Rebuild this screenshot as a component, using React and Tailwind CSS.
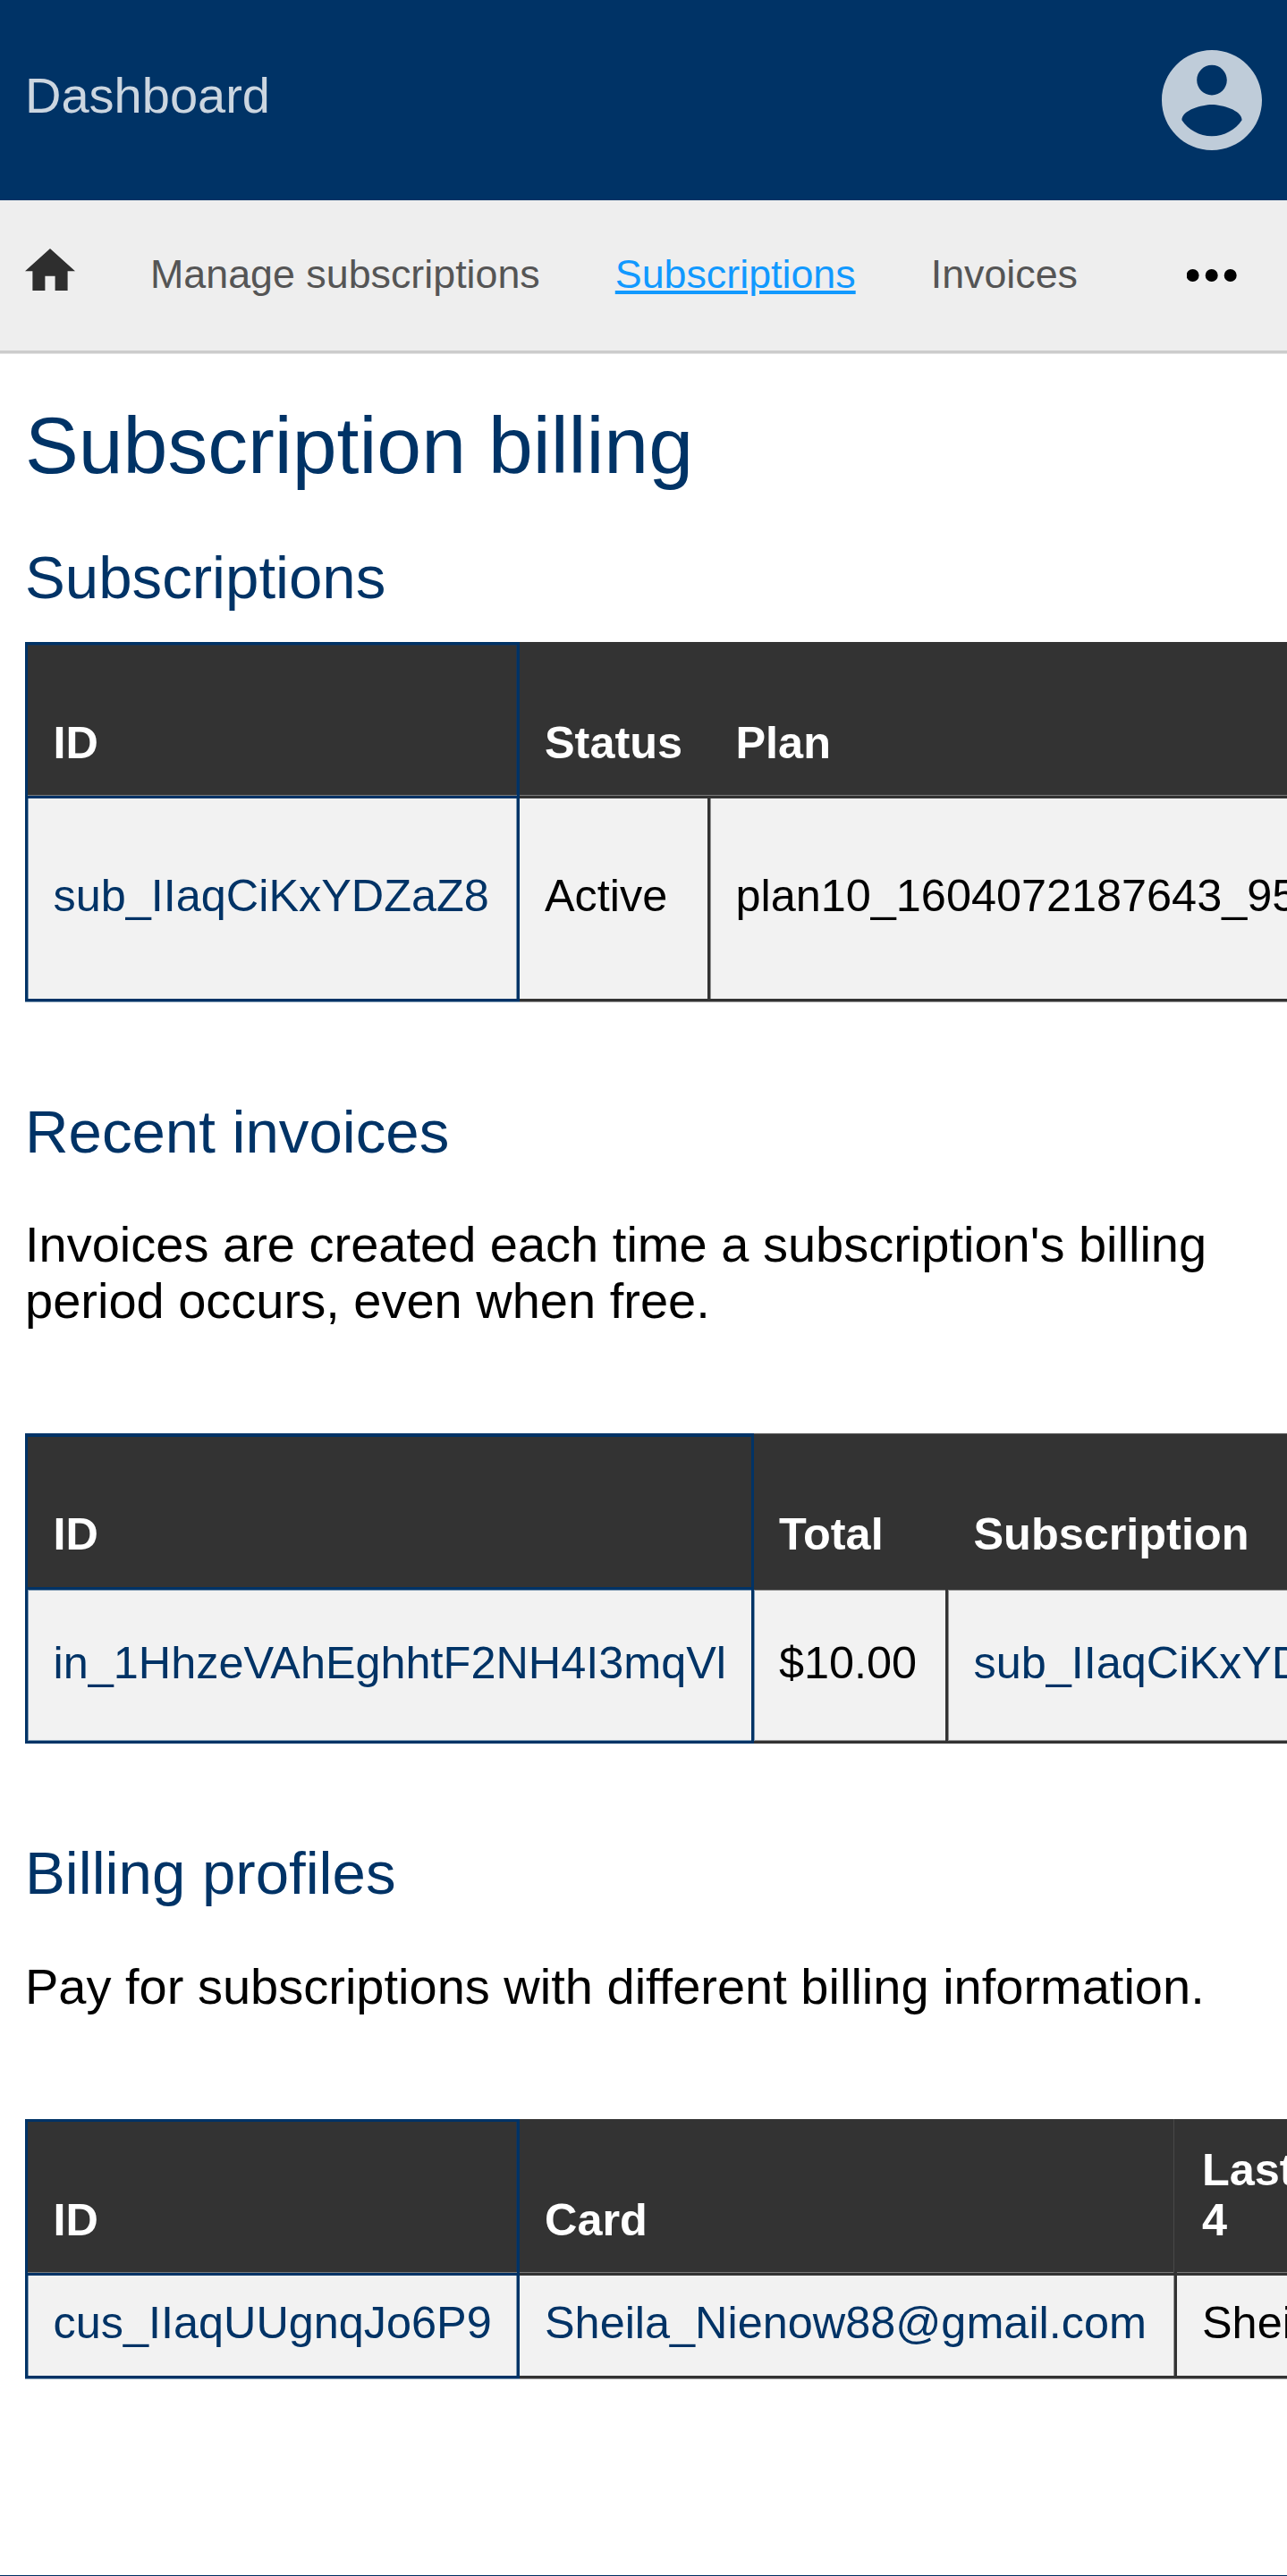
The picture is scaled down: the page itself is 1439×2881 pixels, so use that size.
const HOME = 'M10 20v-6h4v6h5v-8h3L12 3 2 12h3v8z';
const ACCOUNT =
  'M12 2C6.48 2 2 6.48 2 12s4.48 10 10 10 10-4.48 10-10S17.52 2 12 2zm0 3c1.66 0 3 1.34 3 3s-1.34 3-3 3-3-1.34-3-3 1.34-3 3-3zm0 14.2c-2.5 0-4.71-1.28-6-3.22.03-1.99 4-3.08 6-3.08 1.99 0 5.97 1.09 6 3.08-1.29 1.94-3.5 3.22-6 3.22z';

function Header() {
  return (
    <header className="flex h-[224px] items-start justify-between bg-[#003366] px-[28px] pt-[56px]">
      <a className="pt-[19px] text-[56px] leading-[64px] text-[#ccd6e0]">Dashboard</a>
      <svg className="h-[112px] w-[112px]" viewBox="2 2 20 20" fill="#bfccd9">
        <path d={ACCOUNT} />
      </svg>
    </header>
  );
}

function Nav() {
  return (
    <nav className="mb-px flex h-[171px] items-start border-b-[3px] border-[#cccccc] bg-[#eeeeee] pl-[28px] pr-[56px] text-[44.8px] leading-[52px] text-[#555555] shadow-[0_1px_0_#e4e4e4]">
      <svg className="mt-[53.5px] h-[47.6px] w-[56px] shrink-0" viewBox="2 3 20 17" preserveAspectRatio="none" fill="#2e2e2e">
        <path d={HOME} />
      </svg>
      <div className="flex gap-[84px] pl-[84px] pt-[56px] whitespace-nowrap">
        <a>Manage subscriptions</a>
        <a className="text-[#1199ff] underline">Subscriptions</a>
        <a>Invoices</a>
      </div>
      <svg className="ml-auto mt-[77px] h-[14px] w-[56px] shrink-0" viewBox="0 0 56 14">
        <circle cx="6.6" cy="7" r="7" />
        <circle cx="27.7" cy="7" r="7" />
        <circle cx="48.7" cy="7" r="7" />
      </svg>
    </nav>
  );
}

function Heading({ children, className }) {
  return <h2 className={`text-[67.2px] leading-[77px] text-[#003366] ${className}`}>{children}</h2>;
}

const HEAD = 'flex items-end bg-[#333333] font-bold text-white';
const BODY = 'bg-[#f2f2f2]';

export default function App() {
  return (
    <div className="flex h-[2881px] w-[1439px] flex-col overflow-hidden border-b border-[#003366] bg-white font-['Liberation_Sans',Arial,sans-serif] text-black">
      <Header />
      <Nav />
      <main className="pl-[28px]">
        <h1 className="mt-[51px] text-[89.6px] leading-[102px] text-[#003366]">Subscription billing</h1>
        <Heading className="mt-[58px]">Subscriptions</Heading>
        <section className="mt-[34px] text-[50.4px] leading-[56px] whitespace-nowrap">
          <div className="flex h-[175px]">
            <div className={`${HEAD} w-[553px] shrink-0 border-[3px] border-[#003366] pb-[31px] pl-[28.5px] shadow-[inset_0_-1px_0_#7b7b7b,inset_-1px_0_0_#1e3450,inset_0_1px_0_#1e3450]`}>ID</div>
            <div className={`${HEAD} w-[214px] shrink-0 border-b-[3px] border-[#333333] pb-[31px] pl-[28px] shadow-[inset_0_-1px_0_#7b7b7b]`}>Status</div>
            <div className={`${HEAD} grow border-b-[3px] border-[#333333] pb-[31px] pl-[27.5px] shadow-[inset_0_-1px_0_#7b7b7b]`}>Plan</div>
          </div>
          <div className="flex h-[227px]">
            <div className={`${BODY} w-[553px] shrink-0 border-x-[3px] border-b-[3px] border-[#003366] pl-[28.5px] pt-[81px] text-[#003366] shadow-[inset_1px_0_0_#7f99b2,inset_-1px_0_0_#7f99b2]`}>sub_IIaqCiKxYDZaZ8</div>
            <div className={`${BODY} w-[213px] shrink-0 border-r-[3px] border-b-[3px] border-[#333333] pl-[28px] pt-[81px]`}>Active</div>
            <div className={`${BODY} min-w-0 grow overflow-hidden border-b-[3px] border-[#333333] pl-[28.5px] pt-[81px] shadow-[inset_1px_0_0_#929292]`}>plan10_1604072187643_95</div>
          </div>
          <div className="flex h-px">
            <div className="w-[553px] bg-[#7f99b2]" />
            <div className="grow bg-[#999999]" />
          </div>
        </section>

        <Heading className="mt-[106px]">Recent invoices</Heading>
        <p className="mt-[56px] w-[1383px] text-[56px] leading-[63px]">
          Invoices are created each time a subscription's billing period occurs, even when free.
        </p>
        <section className="mt-[117px] text-[50.4px] leading-[56px] whitespace-nowrap">
          <div className="flex h-[175px]">
            <div className={`${HEAD} w-[815px] shrink-0 border-[3px] border-[#003366] pb-[31px] pl-[28.5px] shadow-[inset_0_1px_0_#003366]`}>ID</div>
            <div className={`${HEAD} w-[218px] shrink-0 pb-[34px] pl-[28px] shadow-[inset_0_1px_0_#5c5c5c]`}>Total</div>
            <div className={`${HEAD} grow pb-[34px] pl-[27.5px] shadow-[inset_0_1px_0_#5c5c5c]`}>Subscription</div>
          </div>
          <div className="flex h-[172px]">
            <div className={`${BODY} w-[815px] shrink-0 border-x-[3px] border-b-[3px] border-[#003366] pl-[28.5px] pt-[54px] text-[#003366] shadow-[inset_1px_1px_0_#7f99b2,inset_0_-1px_0_#7f99b2]`}>in_1HhzeVAhEghhtF2NH4I3mqVl</div>
            <div className={`${BODY} w-[217px] shrink-0 border-r-[3px] border-b-[3px] border-[#333333] pl-[28px] pt-[54px] shadow-[inset_1px_0_0_#7f99b2,inset_0_1px_0_#929292,inset_0_-1px_0_#929292]`}>$10.00</div>
            <div className={`${BODY} min-w-0 grow overflow-hidden border-b-[3px] border-[#333333] pl-[28.5px] pt-[54px] text-[#003366] shadow-[inset_1px_1px_0_#929292,inset_0_-1px_0_#929292]`}>sub_IIaqCiKxYDZaZ8</div>
          </div>
        </section>

        <Heading className="mt-[106px]">Billing profiles</Heading>
        <p className="mt-[57px] w-[1383px] text-[56px] leading-[63px]">Pay for subscriptions with different billing information.</p>
        <section className="mt-[117px] text-[50.4px] leading-[56px] whitespace-nowrap">
          <div className="flex h-[175px]">
            <div className={`${HEAD} w-[553px] shrink-0 border-[3px] border-[#003366] pb-[31px] pl-[28.5px] shadow-[inset_0_-1px_0_#7b7b7b,inset_-1px_0_0_#1e3450]`}>ID</div>
            <div className={`${HEAD} w-[732px] shrink-0 border-b-[3px] border-[#333333] pb-[31px] pl-[28px] shadow-[inset_-1px_0_0_#484848,inset_0_-1px_0_#7b7b7b]`}>Card</div>
            <div className={`${HEAD} min-w-0 grow overflow-hidden border-b-[3px] border-l-[3px] border-[#333333] pb-[31px] pl-[28px] shadow-[inset_0_-1px_0_#7b7b7b]`}>
              <span>Last<br />4</span>
            </div>
          </div>
          <div className="flex h-[115px]">
            <div className={`${BODY} w-[553px] shrink-0 border-x-[3px] border-b-[3px] border-[#003366] pl-[28.5px] pt-[25px] text-[#003366] shadow-[inset_1px_0_0_#7f99b2,inset_-1px_0_0_#7f99b2]`}>cus_IIaqUUgnqJo6P9</div>
            <div className={`${BODY} w-[732px] shrink-0 border-b-[3px] border-[#333333] pl-[28px] pt-[25px] text-[#003366] shadow-[inset_-1px_0_0_#929292]`}>Sheila_Nienow88@gmail.com</div>
            <div className={`${BODY} min-w-0 grow overflow-hidden border-b-[3px] border-l-[3px] border-[#333333] pl-[28px] pt-[25px]`}>Sheila</div>
          </div>
          <div className="flex h-px">
            <div className="w-[553px] bg-[#7f99b2]" />
            <div className="grow bg-[#999999]" />
          </div>
        </section>
      </main>
    </div>
  );
}
